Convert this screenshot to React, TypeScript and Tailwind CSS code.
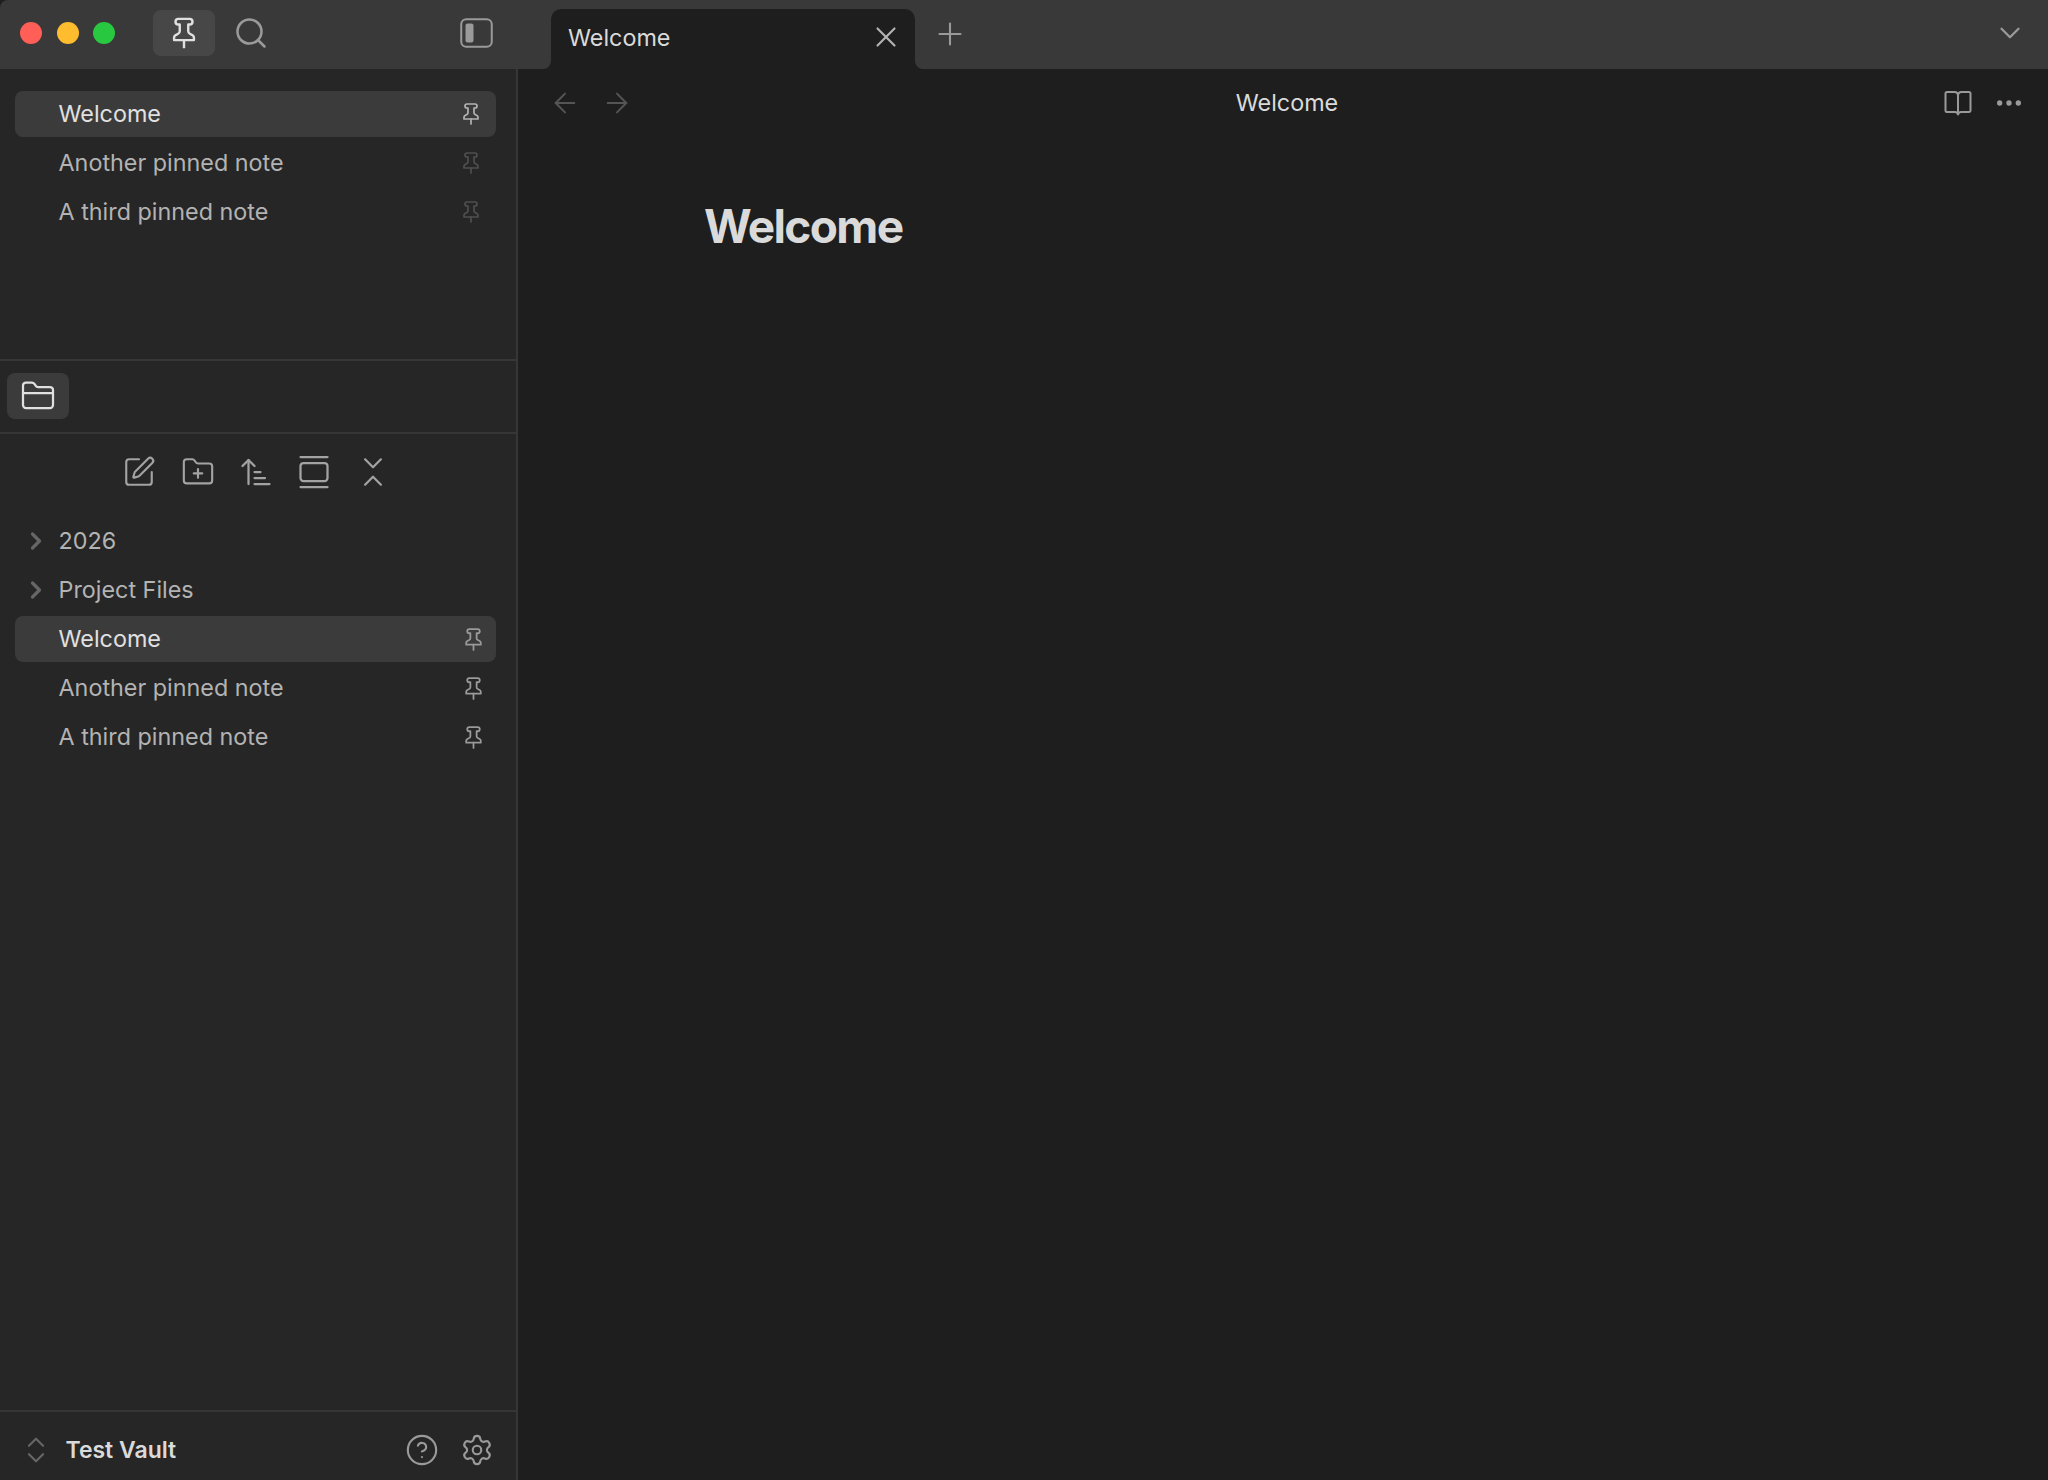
import {
  ArrowLeft,
  ArrowRight,
  ArrowUpNarrowWide,
  ChevronDown,
  ChevronRight,
  ChevronsDownUp,
  ChevronsUpDown,
  CircleHelp,
  Ellipsis,
  FolderClosed,
  FolderPlus,
  GalleryVertical,
  Plus,
  Search,
  Settings,
  SquarePen,
  X,
} from "lucide-react";

function PinIcon({ className }: { className?: string }) {
  return (
    <svg
      viewBox="0 0 24 24"
      fill="none"
      stroke="currentColor"
      strokeWidth="1.7"
      strokeLinecap="round"
      strokeLinejoin="round"
      className={className}
    >
      <line x1="12" y1="17" x2="12" y2="22" />
      <path d="M5 17h14v-1.76a2 2 0 0 0-1.11-1.79l-1.78-.9A2 2 0 0 1 15 10.76V6h1a2 2 0 0 0 0-4H8a2 2 0 0 0 0 4h1v4.76a2 2 0 0 1-1.11 1.79l-1.78.9A2 2 0 0 0 5 15.24Z" />
    </svg>
  );
}

function SidebarIcon() {
  return (
    <svg viewBox="0 0 33 30" fill="none" className="h-[30px] w-[33px] text-[#9a9a9a]">
      <rect x="1.25" y="1.25" width="30.5" height="27.5" rx="5" stroke="currentColor" strokeWidth="2" />
      <rect x="5.500" y="5.500" width="8" height="19" rx="2" fill="currentColor" />
    </svg>
  );
}

function ReadingIcon() {
  return (
    <svg viewBox="0 0 28 26" fill="none" className="h-[26px] w-[28px] text-[#9a9a9a]">
      <path
        d="M14 5.5C14 3.5 12.5 2 10.5 2H3a1.5 1.5 0 0 0-1.5 1.5v17A1.5 1.5 0 0 0 3 22h8c1.5 0 2.5.8 3 2.5.5-1.700 1.500-2.500 3-2.500h8a1.500 1.500 0 0 0 1.500-1.500v-17A1.500 1.500 0 0 0 25 2h-7.500C15.500 2 14 3.500 14 5.500Zm0 0V22"
        stroke="currentColor"
        strokeWidth="2"
        strokeLinecap="round"
        strokeLinejoin="round"
      />
    </svg>
  );
}

function NoteRow({
  name,
  active,
  pinClass,
}: {
  name: string;
  active?: boolean;
  pinClass: string;
}) {
  return (
    <div
      className={`flex h-[46px] items-center rounded-[8px] pl-[43.500px] ${
        active ? "bg-[#3b3b3b] text-[#e0e0e0]" : "text-[#b3b3b3]"
      }`}
    >
      <span className="flex-1">{name}</span>
      <PinIcon className={pinClass} />
    </div>
  );
}

function FolderRow({ name }: { name: string }) {
  return (
    <div className="flex h-[46px] items-center text-[#b3b3b3]">
      <ChevronRight className="ml-[7px] h-[28px] w-[28px] text-[#666666]" strokeWidth={2.8} />
      <span className="ml-[8.500px]">{name}</span>
    </div>
  );
}

const toolIcon = "h-[34px] w-[34px]";

export default function App() {
  const pinnedPin = "mr-[13px] h-[24px] w-[24px]";
  const treePin = "mr-[10px] h-[25px] w-[25px] text-[#9a9a9a]";

  return (
    <div className="flex h-[1480px] w-[2048px] flex-col overflow-hidden bg-[#1e1e1e] font-['Inter',sans-serif] text-[23.350px]">
      <header className="flex h-[69px] shrink-0 rounded-tl-[8px] bg-[#393939]">
        <div className="flex w-[518px] shrink-0 items-center pb-[3px] pl-[20px] pr-[25px]">
          <div className="flex gap-[14.500px]">
            <span className="h-[22px] w-[22px] rounded-full bg-[#ff5f57]" />
            <span className="h-[22px] w-[22px] rounded-full bg-[#febc2e]" />
            <span className="h-[22px] w-[22px] rounded-full bg-[#28c840]" />
          </div>
          <div className="ml-[38px] flex h-[46px] w-[62px] items-center justify-center rounded-[8px] bg-[#474747] text-[#e0e0e0]">
            <PinIcon className="h-[34px] w-[34px]" />
          </div>
          <div className="ml-[5px] flex h-[46px] w-[62px] items-center justify-center text-[#9a9a9a]">
            <Search className="h-[36px] w-[36px]" strokeWidth={1.7} />
          </div>
          <div className="ml-auto">
            <SidebarIcon />
          </div>
        </div>
        <div className="flex flex-1 items-end pl-[33px] pr-[21px]">
          <div className="relative flex h-[60px] w-[364px] items-center rounded-t-[10px] bg-[#1e1e1e] pl-[17px] pr-[12px] text-[#dadada]">
            <span className="flex-1 pb-[3px]">Welcome</span>
            <X className="mb-[4px] h-[34px] w-[34px] text-[#b3b3b3]" strokeWidth={1.5} />
            <span className="absolute bottom-0 left-[-8px] h-[8px] w-[8px] bg-[#1e1e1e]">
              <span className="block h-full w-full rounded-br-[8px] bg-[#393939]" />
            </span>
            <span className="absolute bottom-0 right-[-8px] h-[8px] w-[8px] bg-[#1e1e1e]">
              <span className="block h-full w-full rounded-bl-[8px] bg-[#393939]" />
            </span>
          </div>
          <div className="mb-[17px] ml-[17px] flex-1">
            <Plus className="h-[36px] w-[36px] text-[#9a9a9a]" strokeWidth={1.4} />
          </div>
          <ChevronDown className="mb-[19px] h-[34px] w-[34px] text-[#9a9a9a]" strokeWidth={1.6} />
        </div>
      </header>

      <div className="flex min-h-0 flex-1">
        <aside className="flex w-[518px] shrink-0 flex-col border-r-2 border-[#363636] bg-[#262626]">
          <section className="flex h-[292px] shrink-0 flex-col gap-[3px] border-b-2 border-[#363636] pl-[15px] pr-[20px] pt-[22px]">
            <NoteRow name="Welcome" active pinClass={`${pinnedPin} text-[#b3b3b3]`} />
            <NoteRow name="Another pinned note" pinClass={`${pinnedPin} text-[#4f4f4f]`} />
            <NoteRow name="A third pinned note" pinClass={`${pinnedPin} text-[#4f4f4f]`} />
          </section>

          <div className="flex h-[73px] shrink-0 items-center border-b-2 border-[#363636] pb-[2px] pl-[7px]">
            <div className="flex h-[46px] w-[62px] items-center justify-center rounded-[8px] bg-[#3b3b3b] text-[#e0e0e0]">
              <FolderClosed className="h-[36px] w-[36px]" strokeWidth={1.5} />
            </div>
          </div>

          <div className="flex h-[84px] shrink-0 items-center justify-center pb-[8px] pr-[4px] text-[#a3a3a3]">
            <div className="flex w-[58.400px] justify-center">
              <SquarePen className={toolIcon} strokeWidth={1.5} />
            </div>
            <div className="flex w-[58.400px] justify-center">
              <FolderPlus className={toolIcon} strokeWidth={1.5} />
            </div>
            <div className="flex w-[58.400px] justify-center">
              <ArrowUpNarrowWide className="h-[36px] w-[36px]" strokeWidth={1.5} />
            </div>
            <div className="flex w-[58.400px] justify-center">
              <GalleryVertical className="h-[36px] w-[36px]" strokeWidth={1.5} />
            </div>
            <div className="flex w-[58.400px] justify-center">
              <ChevronsDownUp className="h-[38px] w-[38px]" strokeWidth={1.4} />
            </div>
          </div>

          <section className="flex flex-1 flex-col gap-[3px] pl-[15px] pr-[20px]">
            <FolderRow name="2026" />
            <FolderRow name="Project Files" />
            <NoteRow name="Welcome" active pinClass={treePin} />
            <NoteRow name="Another pinned note" pinClass={treePin} />
            <NoteRow name="A third pinned note" pinClass={treePin} />
          </section>

          <footer className="flex h-[70px] shrink-0 items-center border-t-2 border-[#363636] pl-[19px] pr-[22.500px] pt-[8px]">
            <ChevronsUpDown className="h-[34px] w-[34px] text-[#666666]" strokeWidth={1.5} />
            <span className="ml-[12.500px] flex-1 text-[23px] font-semibold text-[#dadada]">Test Vault</span>
            <CircleHelp className={`${toolIcon} text-[#9a9a9a]`} strokeWidth={1.5} />
            <Settings className={`ml-[20.500px] ${toolIcon} text-[#9a9a9a]`} strokeWidth={1.5} />
          </footer>
        </aside>

        <main className="flex min-w-0 flex-1 flex-col">
          <div className="grid h-[68px] shrink-0 grid-cols-[1fr_auto_1fr] items-center pl-[31px] pr-[23px]">
            <div className="flex gap-[20px]">
              <ArrowLeft className="h-[32px] w-[32px] text-[#555555]" strokeWidth={1.5} />
              <ArrowRight className="h-[32px] w-[32px] text-[#555555]" strokeWidth={1.5} />
            </div>
            <span className="text-[#dadada]">Welcome</span>
            <div className="flex items-center justify-end gap-[21px]">
              <ReadingIcon />
              <Ellipsis className="h-[32px] w-[32px] text-[#9a9a9a]" strokeWidth={2} />
            </div>
          </div>
          <h1 className="pl-[186px] pt-[66px] text-[46px] font-bold leading-none tracking-[-0.036em] text-[#dadada]">
            Welcome
          </h1>
        </main>
      </div>
    </div>
  );
}
